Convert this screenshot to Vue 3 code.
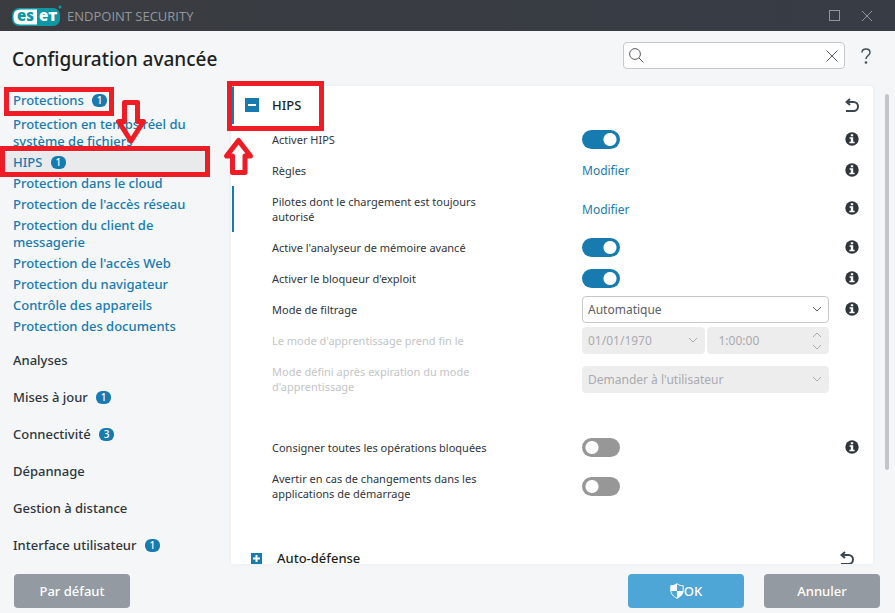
<template>
  <div class="window">
    <header class="titlebar">
      <svg class="logo" width="52" height="24" viewBox="0 0 52 24" role="img" aria-label="eset">
        <rect x="0" y="4" width="48" height="18" rx="7" fill="#0e98a3" />
        <path d="M25 5.500H8Q1.500 5.500 1.500 12v2Q1.500 20.500 8 20.500H25z" fill="#fff" />
        <text x="5" y="17" class="logo-text" fill="#0e98a3">es</text>
        <text x="27" y="17" class="logo-text" fill="#fff">eт</text>
        <circle cx="48" cy="3" r="1.500" fill="#0e98a3" />
      </svg>
      <span class="product">ENDPOINT SECURITY</span>
      <div class="window-buttons">
        <button type="button" aria-label="Agrandir">
          <svg width="12" height="12" viewBox="0 0 12 12"><rect x="0.500" y="0.500" width="10" height="10" /></svg>
        </button>
        <button type="button" aria-label="Fermer">
          <svg width="12" height="12" viewBox="0 0 12 12"><path d="M1 1l10 10M11 1L1 11" /></svg>
        </button>
      </div>
    </header>

    <div class="toolbar">
      <h1>Configuration avancée</h1>
      <div class="search">
        <svg width="16" height="16" viewBox="0 0 16 16"><circle cx="6" cy="6" r="5.400" /><path d="M10 10L14.500 14.500" /></svg>
        <input v-model="search" type="text" aria-label="Rechercher">
        <button type="button" aria-label="Effacer" @click="search = ''">
          <svg width="12" height="12" viewBox="0 0 12 12"><path d="M0.500 0.500l11 11M11.500 0.500L0.500 11.500" /></svg>
        </button>
      </div>
      <button class="help" type="button" aria-label="Aide">
        <svg width="10" height="16" viewBox="0 0 10 16">
          <path d="M1 4.500C1 2 2.800 1 5 1s4 1.200 4 3.500C9 7.500 5 7.500 5 11" />
          <circle cx="5" cy="14.500" r="0.600" />
        </svg>
      </button>
    </div>

    <div class="content">
      <nav class="sidebar">
        <a href="#" class="group active">Protections <span class="badge">1</span></a>
        <ul class="sub">
          <li v-for="item in protections" :key="item.label" :class="{ selected: item.selected }">
            <a href="#">{{ item.label }} <span v-if="item.count" class="badge">{{ item.count }}</span></a>
          </li>
        </ul>
        <a v-for="group in groups" :key="group.label" href="#" class="group">
          {{ group.label }} <span v-if="group.count" class="badge">{{ group.count }}</span>
        </a>
      </nav>

      <main class="panel">
        <div class="section changed">
          <button class="expander" type="button" aria-label="Réduire">
            <svg width="14" height="14" viewBox="0 0 14 14"><rect width="14" height="14" fill="#177bb0" /><path d="M3 7h8" stroke="#fff" stroke-width="2" /></svg>
          </button>
          <h2>HIPS</h2>
          <button class="undo" type="button" aria-label="Rétablir">
            <svg width="14" height="15" viewBox="0 0 14 15"><path d="M5 1L1.500 4L5 7M2 4H8.500A4.500 4.500 0 0 1 8.500 13H1" /></svg>
          </button>
        </div>

        <div
          v-for="row in rows"
          :key="row.id"
          class="row"
          :class="{ changed: row.changed, disabled: row.disabled, spaced: row.spaced }"
        >
          <label class="label" :for="row.id">{{ row.label }}</label>
          <div class="control">
            <input v-if="row.type === 'toggle'" :id="row.id" v-model="row.value" type="checkbox" class="toggle">
            <a v-else-if="row.type === 'link'" :id="row.id" href="#" class="edit">Modifier</a>
            <div v-else-if="row.type === 'select'" class="field">
              <select :id="row.id" :disabled="row.disabled"><option>{{ row.value }}</option></select>
              <svg class="chevron" width="10" height="6" viewBox="0 0 10 6"><path d="M1 1l4 4l4-4" /></svg>
            </div>
            <template v-else>
              <div class="field">
                <select :id="row.id" disabled><option>01/01/1970</option></select>
                <svg class="chevron" width="10" height="6" viewBox="0 0 10 6"><path d="M1 1l4 4l4-4" /></svg>
              </div>
              <div class="field time">
                <input type="text" value="1:00:00" aria-label="Heure" disabled>
                <svg class="spinner" width="10" height="18" viewBox="0 0 10 18"><path d="M1 5l4-4l4 4M1 13l4 4l4-4" /></svg>
              </div>
            </template>
          </div>
          <button v-if="row.info" class="info" type="button" aria-label="Informations">
            <svg width="14" height="14" viewBox="0 0 14 14">
              <circle cx="7" cy="7" r="6.700" fill="#2f353c" />
              <path d="M5.800 2.300h2.400v2H5.800zM4.600 5.300h3.600v4.500h1.400v1.500H4.400V9.800h1.400V6.800H4.600z" fill="#fff" />
            </svg>
          </button>
        </div>

        <div class="section collapsed">
          <button class="expander" type="button" aria-label="Développer">
            <svg width="11" height="11" viewBox="0 0 11 11"><rect width="11" height="11" fill="#177bb0" /><path d="M2 5.500h7M5.500 2v7" stroke="#fff" stroke-width="2" /></svg>
          </button>
          <h2>Auto-défense</h2>
          <button class="undo" type="button" aria-label="Rétablir">
            <svg width="14" height="15" viewBox="0 0 14 15"><path d="M5 1L1.500 4L5 7M2 4H8.500A4.500 4.500 0 0 1 8.500 13H1" /></svg>
          </button>
        </div>
      </main>
      <div class="scroll"><div class="thumb"></div></div>
    </div>

    <footer class="footer">
      <button type="button" class="btn">Par défaut</button>
      <button type="button" class="btn primary">
        <svg width="14" height="16" viewBox="0 0 14 16">
          <path d="M7 0.700C5 2.300 3 2.700 0.800 2.700V7c0 4 2.500 6.500 6.200 8.300C10.700 13.500 13.200 11 13.200 7V2.700C11 2.700 9 2.300 7 0.700z" fill="none" stroke="#fff" />
          <path d="M7 0.700C5 2.300 3 2.700 0.800 2.700V8H7zM7 8h6.200c-0.400 3.500-2.700 5.600-6.200 7.300z" fill="#fff" />
        </svg>OK
      </button>
      <button type="button" class="btn">Annuler</button>
    </footer>

    <!-- repères rouges -->
    <svg class="marks" width="330" height="190" viewBox="0 0 330 190" aria-hidden="true">
      <rect x="6.500" y="89.500" width="105" height="24" />
      <rect x="2.500" y="148.500" width="205" height="26" />
      <rect x="229.500" y="83.500" width="92" height="45" />
      <path class="arrow" d="M124.500 102.500h13v19h6l-12.500 19.500l-12.500-19.500h6z" />
      <path class="arrow" d="M232.500 172.500h12.500v-16.500h5.500l-12-15.500l-12 15.500h6z" />
    </svg>
  </div>
</template>

<script setup>
import { ref } from 'vue'

const search = ref('')

const protections = [
  { label: 'Protection en temps réel du système de fichiers' },
  { label: 'HIPS', count: 1, selected: true },
  { label: 'Protection dans le cloud' },
  { label: "Protection de l'accès réseau" },
  { label: 'Protection du client de messagerie' },
  { label: "Protection de l'accès Web" },
  { label: 'Protection du navigateur' },
  { label: 'Contrôle des appareils' },
  { label: 'Protection des documents' }
]

const groups = [
  { label: 'Analyses' },
  { label: 'Mises à jour', count: 1 },
  { label: 'Connectivité', count: 3 },
  { label: 'Dépannage' },
  { label: 'Gestion à distance' },
  { label: 'Interface utilisateur', count: 1 }
]

const rows = ref([
  { id: 'hips', label: 'Activer HIPS', type: 'toggle', value: true, info: true },
  { id: 'rules', label: 'Règles', type: 'link', info: true },
  { id: 'drivers', label: 'Pilotes dont le chargement est toujours autorisé', type: 'link', info: true, changed: true },
  { id: 'memory', label: "Active l'analyseur de mémoire avancé", type: 'toggle', value: true, info: true },
  { id: 'exploit', label: "Activer le bloqueur d'exploit", type: 'toggle', value: true, info: true },
  { id: 'filter', label: 'Mode de filtrage', type: 'select', value: 'Automatique', info: true },
  { id: 'learning-end', label: "Le mode d'apprentissage prend fin le", type: 'datetime', disabled: true },
  { id: 'after', label: "Mode défini après expiration du mode d'apprentissage", type: 'select', value: "Demander à l'utilisateur", disabled: true },
  { id: 'log', label: 'Consigner toutes les opérations bloquées', type: 'toggle', value: false, info: true, spaced: true },
  { id: 'startup', label: 'Avertir en cas de changements dans les applications de démarrage', type: 'toggle', value: false }
])
</script>

<style>
body {
  margin: 0;
}
</style>

<style scoped>
* {
  box-sizing: border-box;
}

.window {
  position: relative;
  display: flex;
  flex-direction: column;
  height: 100vh;
  overflow: hidden;
  background: #f4f6f8;
  color: #2f353c;
  font-family: "Noto Sans", "Open Sans", sans-serif;
  font-size: 12px;
}

button {
  padding: 0;
  border: none;
  background: none;
  font-family: inherit;
  cursor: pointer;
}

svg {
  display: block;
}

a {
  color: #177bb0;
  text-decoration: none;
}

.titlebar {
  display: flex;
  align-items: center;
  flex: none;
  height: 31px;
  padding: 0 22px 0 12px;
  background: linear-gradient(90deg, #3a3c40, #373c45);
}

.logo-text {
  font-family: "Open Sans", sans-serif;
  font-size: 15px;
  font-weight: 800;
}

.product {
  margin-left: 3px;
  color: #93979c;
  font-family: "Open Sans", sans-serif;
  font-size: 13px;
}

.window-buttons {
  display: flex;
  gap: 20px;
  margin-left: auto;
}

.window-buttons svg {
  fill: none;
  stroke: #92969b;
}

.toolbar {
  display: flex;
  align-items: center;
  flex: none;
  height: 55px;
  padding: 0 24px 0 12px;
}

h1 {
  flex: 1;
  margin: 0;
  color: #1d1f22;
  font-size: 19px;
  font-weight: 500;
}

.search {
  display: flex;
  align-items: center;
  width: 222px;
  height: 27px;
  margin-bottom: 6px;
  padding: 0 6px 0 5px;
  border: 1px solid #c6c8ca;
  border-radius: 4px;
  background: #fff;
}

.search input {
  flex: 1;
  min-width: 0;
  border: none;
  outline: none;
  background: none;
}

.search svg,
.help svg {
  fill: none;
  stroke: #555a60;
}

.help {
  margin: 0 0 6px 16px;
}

.help svg {
  stroke: #414d57;
  stroke-width: 1.5px;
}

.content {
  display: flex;
  flex: 1;
  min-height: 0;
}

.sidebar {
  flex: none;
  width: 231px;
  padding-top: 6px;
  font-size: 13px;
  font-weight: 500;
  line-height: 17px;
}

.group {
  display: block;
  margin-bottom: 20px;
  padding-left: 13px;
  color: #2f353c;
}

.group.active {
  margin-bottom: 5px;
  color: #177bb0;
}

.sub {
  margin: 0 0 15px;
  padding: 0;
  list-style: none;
}

.sub li {
  margin-right: 23px;
  padding: 2px 10px 2px 13px;
}

.sub .selected {
  background: #e9eaec;
}

.badge {
  display: inline-block;
  width: 15px;
  margin-left: 5px;
  border-radius: 6px;
  background: #177bb0;
  color: #fff;
  font-size: 10px;
  line-height: 13px;
  text-align: center;
  vertical-align: 1px;
}

.panel {
  flex: 1;
  min-width: 0;
  overflow: hidden;
  border-radius: 4px 4px 0 0;
  background: #fff;
  box-shadow: 0 0 4px #e9ebed;
}

.section {
  display: flex;
  align-items: center;
  height: 38px;
  padding: 0 14px;
}

h2 {
  flex: 1;
  margin: 0 0 0 13px;
  color: #1d1f22;
  font-size: 13px;
  font-weight: 500;
}

.collapsed {
  margin-top: 30px;
  padding: 0 19px 0 20px;
}

.collapsed h2 {
  margin-left: 15px;
}

.undo svg {
  fill: none;
  stroke: #3b4650;
  stroke-width: 2px;
}

.changed {
  box-shadow: inset 1px 0 #fff, inset 3px 0 #177bb0;
}

.row {
  display: grid;
  grid-template-columns: 310px minmax(0, 1fr) 44px;
  align-items: center;
  min-height: 31px;
  padding-left: 41px;
}

.row.spaced {
  margin-top: 30px;
}

.label {
  padding: 8px 80px 8px 0;
  font-size: 11px;
  line-height: 15px;
}

.disabled .label {
  color: #c3c5c7;
}

.control {
  display: flex;
  gap: 2px;
}

.toggle {
  appearance: none;
  width: 38px;
  height: 19px;
  margin: 0;
  border-radius: 10px;
  background: radial-gradient(circle at 10px 50%, #fff 6px, #979797 7px);
}

.toggle:checked {
  background: radial-gradient(circle at 28px 50%, #fff 6px, #177bb0 7px);
}

.field {
  position: relative;
  flex: 1;
  min-width: 0;
}

.field select,
.field input {
  appearance: none;
  display: block;
  width: 100%;
  height: 27px;
  margin: 0;
  padding: 0 5px;
  border: 1px solid #c6c8ca;
  border-radius: 4px;
  background: #fff;
  color: #5c6166;
  font-family: inherit;
  font-size: 12px;
}

.field select:disabled,
.field input:disabled {
  border-color: #ededed;
  background: #ededed;
  color: #a9abad;
  opacity: 1;
}

.field.time input {
  padding-left: 11px;
}

.chevron,
.spinner {
  position: absolute;
  top: 10px;
  right: 7px;
  fill: none;
  stroke: #5c6166;
  pointer-events: none;
}

.spinner {
  top: 5px;
}

.disabled .chevron,
.disabled .spinner {
  stroke: #a9abad;
}

.info {
  justify-self: end;
  margin: 0 14px 2px 0;
}

.scroll {
  flex: none;
  width: 22px;
  padding: 8px 6px 0 12px;
}

.thumb {
  height: 80%;
  border-radius: 2px;
  background: #c3c6c9;
}

.footer {
  display: flex;
  flex: none;
  gap: 20px;
  padding: 10px 15px 5px 14px;
}

.btn {
  display: flex;
  align-items: center;
  justify-content: center;
  width: 116px;
  height: 34px;
  border-radius: 4px;
  background: #949aa1;
  color: #fff;
  font-size: 13px;
  font-weight: 500;
}

.btn.primary {
  margin-left: auto;
  background: #4da6d6;
}

.marks {
  position: absolute;
  top: 0;
  left: 0;
  fill: none;
  stroke: #ee1c25;
  stroke-width: 5px;
  pointer-events: none;
}

.marks .arrow {
  stroke-linejoin: round;
}
</style>
